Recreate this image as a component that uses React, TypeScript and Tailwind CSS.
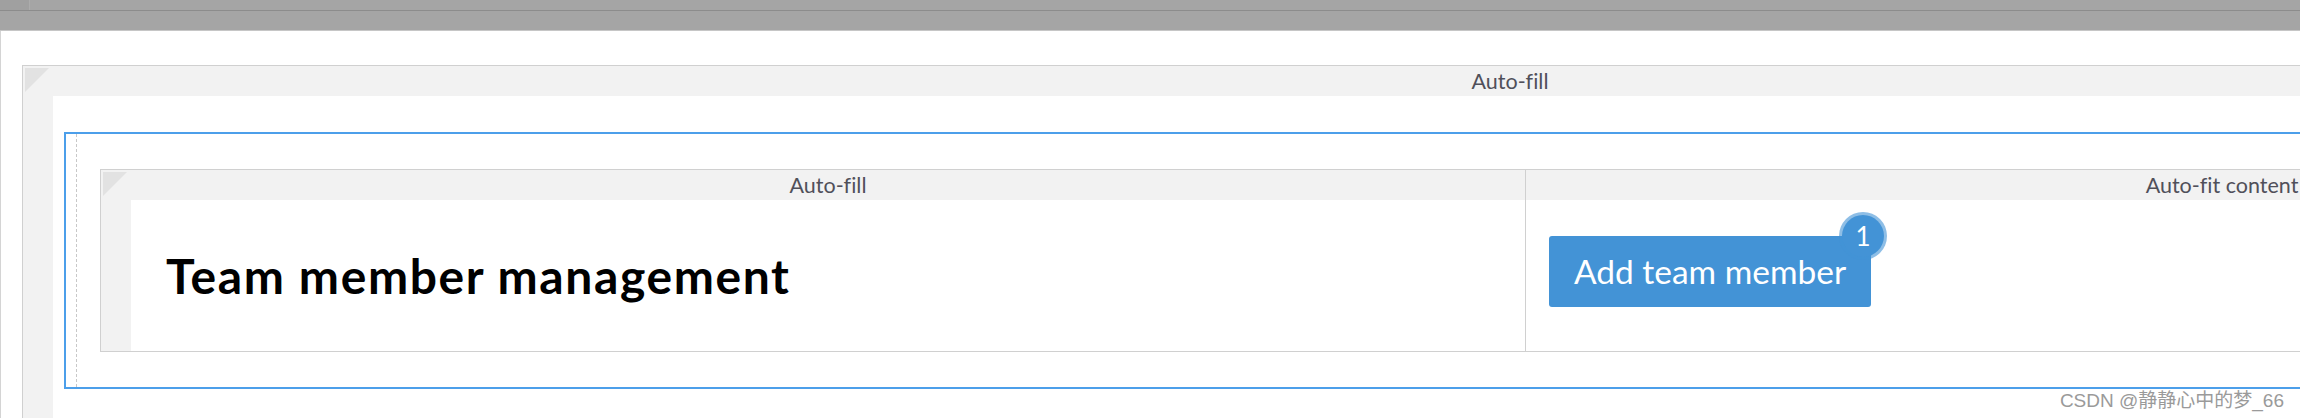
import React from "react";

function Corner() {
  return (
    <div className="w-[30px] h-[30px] shrink-0 p-[2px]">
      <svg width="24" height="24" viewBox="0 0 24 24">
        <polygon points="0,0 24,0 0,24" fill="#e2e2e2" />
      </svg>
    </div>
  );
}

export default function App() {
  return (
    <div
      className="relative w-[2300px] h-[418px] overflow-hidden bg-white [font-variant-ligatures:none]"
      style={{ fontFamily: "Lato, 'Open Sans', sans-serif" }}
    >
      {/* top toolbar */}
      <div className="flex flex-col w-full">
        <div className="flex h-[10px] bg-[#a5a5a5]">
          <div className="w-[30px] h-full bg-[#a0a0a0] border-r border-[#acacac]" />
        </div>
        <div className="h-px bg-[#8c8c8c]" />
        <div className="h-[19px] bg-[#a5a5a5]" />
        <div className="h-px bg-[#c6c6c6]" />
      </div>

      {/* canvas */}
      <div className="flex border-l border-[#d4d4d4] h-[387px] pl-[21px] pt-[34px]">
        {/* outer container */}
        <div className="w-[2946px] shrink-0 border border-[#d0d0d0] flex flex-col self-start">
          <div className="flex h-[30px] bg-[#f2f2f2]">
            <Corner />
            <div className="flex-1 text-center text-[21.5px] leading-[30px] text-[#50505a]">
              Auto-fill
            </div>
          </div>
          <div className="flex">
            <div className="w-[30px] shrink-0 bg-[#f2f2f2]" />
            <div className="flex-1 pl-[11px] pr-[11px] pt-[36px] pb-[120px]">
              {/* selected blue box */}
              <div className="flex border-2 border-[#4c9fea] pr-[35px]">
                <div className="ml-[10px] border-l border-dashed border-[#c8c8c8]" />
                <div className="ml-[23px] my-[35px] flex-1 border border-[#d0d0d0] flex flex-col">
                  {/* header row */}
                  <div className="flex h-[30px] bg-[#f2f2f2]">
                    <Corner />
                    <div className="w-[1394px] shrink-0 text-center text-[21.5px] leading-[30px] text-[#50505a]">
                      Auto-fill
                    </div>
                    <div className="w-px bg-[#d0d0d0]" />
                    <div className="flex-1 text-center text-[21.5px] leading-[30px] text-[#50505a]">
                      Auto-fit content
                    </div>
                  </div>
                  {/* content row */}
                  <div className="flex h-[151px]">
                    <div className="w-[30px] shrink-0 bg-[#f2f2f2]" />
                    <div className="w-[1394px] shrink-0 flex items-center pl-[35px]">
                      <h1 className="text-[48px] font-bold text-black leading-none tracking-[1.6px]">
                        Team member management
                      </h1>
                    </div>
                    <div className="w-px bg-[#d0d0d0]" />
                    <div className="flex-1 pl-[23px] pt-[36px]">
                      <div className="relative inline-flex">
                        <button className="h-[71px] w-[322px] rounded-[3px] bg-[#4393d6] text-white text-[33.5px] flex items-center justify-center">
                          Add team member
                        </button>
                        <span className="absolute -top-[21px] -right-[13px] w-[42px] h-[42px] rounded-full bg-[#4393d6] shadow-[0_0_0_3px_rgba(67,147,214,0.6)] text-white text-[26px] leading-none flex items-center justify-center">
                          1
                        </span>
                      </div>
                    </div>
                  </div>
                </div>
              </div>
            </div>
          </div>
        </div>
      </div>

      {/* watermark */}
      <div
        className="absolute right-[16px] bottom-[8px] text-[19px] leading-none text-[#9a9a9a]"
        style={{
          fontFamily: "'Liberation Sans', 'Noto Sans CJK SC', sans-serif",
          textShadow: "1px 1px 0 rgba(255,255,255,0.8)",
        }}
      >
        CSDN @静静心中的梦_66
      </div>
    </div>
  );
}
